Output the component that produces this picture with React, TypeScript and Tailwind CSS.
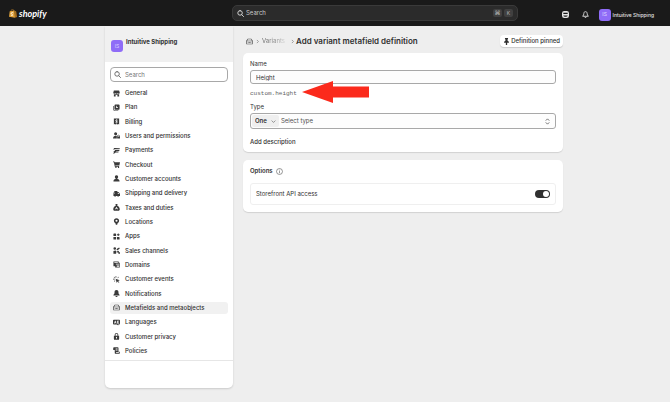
import { useState, type ReactNode } from 'react'
import clsx from 'clsx'

const navIcons: Record<string, ReactNode> = {
  General: <path d="M2 1h12l1.500 5a2.400 2.400 0 0 1-4.800 0 2.600 2.600 0 0 1-5.400 0A2.400 2.400 0 0 1 .5 6zM2 9.500h12V15h-4v-3.500H6V15H2z" />,
  Plan: <path fillRule="evenodd" d="M5.500 1H13a2 2 0 0 1 2 2v8a2 2 0 0 1-2 2H5.500a2 2 0 0 1-2-2V3a2 2 0 0 1 2-2zM7 4v5h4.500V7.500h-3V4zM.8 4.500v8.500a2.500 2.500 0 0 0 2.500 2.500H12V14H4a1.500 1.500 0 0 1-1.500-1.500v-8z" />,
  Billing: <path fillRule="evenodd" d="M2 1h12v14l-2-1.500-2 1.500-2-1.500L6 15l-2-1.500L2 15zm5.200 2v1C5 4.400 5 8 7.400 8.600c1.600.4 1.600 1.400.6 1.400H5.500v1.500h1.700v1h1.600v-1c2.400-.5 2.400-3.900 0-4.500-1.700-.4-1.700-1.500-.6-1.500h2.300V4H8.800V3z" />,
  'Users and permissions': <path fillRule="evenodd" d="M6 .5a3.500 3.500 0 1 1 0 7 3.500 3.500 0 0 1 0-7zM0 15c0-4 2.500-6.500 6-6.500 1 0 2 .2 2.700.5v6zM10 10V8.500a2.500 2.500 0 0 1 5 0V10h1v5H9.500v-5zm1.300 0h2.400V8.500a1.200 1.200 0 0 0-2.400 0z" />,
  Payments: <path d="M4 2h11c1 0 1 1.500 0 1.800L5 4.500c-1 .2-2 .8-2.500 1.500H1c.2-2.500 1.200-4 3-4zM5 6h10l-.8 3H8L6.500 10H13l-.8 2.500H6L3 15H0l3-4H1l1-2h3L3.500 8z" />,
  Checkout: <path d="M0 1h3l.7 2H16l-1.500 7H5.300l.3 1.200H14V13H4.200L2 3H0zM6 13.300a1.500 1.500 0 1 1 0 2.700 1.500 1.500 0 0 1 0-2.700zm6 0a1.500 1.500 0 1 1 0 2.700 1.500 1.500 0 0 1 0-2.700z" />,
  'Customer accounts': <path d="M8 .5a3.800 3.800 0 0 1 2.200 6.900L10 9c3.500.5 5 2.500 5 6H1c0-3.500 1.500-5.500 5-6l-.2-1.600A3.800 3.800 0 0 1 8 .5z" />,
  'Shipping and delivery': <path fillRule="evenodd" d="M3 2h7v2.500h3L16 9v4.500h-2a2.300 2.300 0 0 1-4.400 0H7a2.300 2.300 0 0 1-4.400 0H1V9h3V8H0V6h3zm8 4v3h2.800L12.300 6z" />,
  'Taxes and duties': <path fillRule="evenodd" d="M5.500 0h5l-1 3.500c3.500 1.500 6 5.500 6 8.500 0 2-1.200 3.500-3 3.500h-9c-1.800 0-3-1.500-3-3.500 0-3 2.500-7 6-8.500zM8 6.500 4.500 12h1.800l.7-1.200h2l.7 1.200h1.800z" />,
  Locations: <path fillRule="evenodd" d="M8 .5c3.600 0 6 2.600 6 5.800 0 2.600-1.600 4.700-3.500 5.700l-1 3.500h-3l-1-3.500C3.600 11 2 8.900 2 6.300 2 3.100 4.400.5 8 .5zm0 3.300a2.400 2.400 0 1 0 0 4.800 2.400 2.400 0 0 0 0-4.800z" />,
  Apps: <path d="M2 1h4a1 1 0 0 1 1 1v5H2a1 1 0 0 1-1-1V2a1 1 0 0 1 1-1zM11 1h2v2h2v2h-2v2h-2V5H9V3h2zM1 9h6v5a1 1 0 0 1-1 1H2a1 1 0 0 1-1-1zm8 0h5a1 1 0 0 1 1 1v4a1 1 0 0 1-1 1h-4a1 1 0 0 1-1-1z" />,
  'Sales channels': <path d="M4 .5a3 3 0 1 1 0 6 3 3 0 0 1 0-6zM9 4l5-3 1.500 2.500-5 4L8 7zM1 9l5-1 2 2.500L7 15.500H1zM11.500 8.500a2.200 2.200 0 1 1 0 4.400 2.200 2.200 0 0 1 0-4.400zM13 12h3v3.500h-4z" />,
  Domains: <path fillRule="evenodd" d="M1 1h12v3h2.500v11H5v-3H1zm2 1.500v1.300h8V2.500zM6.500 6v2H14V6zm2 4v3H14v-3z" />,
  'Customer events': <path d="m6 6 9.500 3.500-4 1.700 3 3-1.300 1.300-3-3L8.500 16zM6 0h1.500v4H6zM0 6.500h4V8H0zM1.500 2.500l1-1 2.800 2.800-1 1zM10 4.300l2.500-2.800 1 1-2.500 2.800zM2 12l2.500-2.500 1 1L3 13z" />,
  Notifications: <path d="M8 0c3 0 4.500 2 4.500 5 0 3 .5 3.500 2.500 6v1.500H1V11c2-2.500 2.500-3 2.500-6C3.500 2 5 0 8 0zM5.500 13.500h5a2.500 2.500 0 0 1-5 0z" />,
  'Metafields and metaobjects': <path fillRule="evenodd" d="M4 1.500h8L15.500 6v6.500a2 2 0 0 1-2 2h-11a2 2 0 0 1-2-2V6zM4.800 3 2.500 6h11l-2.300-3zM2 7.500v5c0 .3.200.5.5.5h11c.3 0 .5-.2.500-.5v-5zM4 9h2v2H4zm3 0h2v2H7zm3 0h2v2h-2z" />,
  Languages: <path fillRule="evenodd" d="M2 1.500h12a2 2 0 0 1 2 2v7a2 2 0 0 1-2 2h-2V15l-3-2.500H2a2 2 0 0 1-2-2v-7a2 2 0 0 1 2-2zM4.500 4 2.300 10h1.500l.4-1.200h1.800L6.400 10h1.500L5.700 4zM9 4v6h5V8.800h-3.500V7.500h3V6.300h-3V5.200H14V4z" />,
  'Customer privacy': <path fillRule="evenodd" d="M8 0c2.500 0 4 1.700 4 4v2h2v7.500a2 2 0 0 1-2 2H4a2 2 0 0 1-2-2V6h2V4c0-2.300 1.500-4 4-4zM5.800 6h4.400V4c0-1.400-.8-2.200-2.200-2.200S5.800 2.600 5.800 4zM8 8.500a1.500 1.500 0 0 0-.8 2.700V13h1.600v-1.800A1.500 1.500 0 0 0 8 8.500z" />,
  Policies: <path fillRule="evenodd" d="M2.500.5h8a2 2 0 0 1 2 2V11h3v2.500a2 2 0 0 1-2 2H6a2 2 0 0 1-2-2V7H.5V2.500a2 2 0 0 1 2-2zM6 3.500V5h4.500V3.500zm0 3V8h4.500V6.500zm1 5.500v1.500h6.500V12z" />,
}

function Icon({ children, className }: { children: ReactNode; className?: string }) {
  return (
    <svg viewBox="0 0 16 16" fill="currentColor" aria-hidden="true" className={clsx('shrink-0', className ?? 'size-[7px]')}>
      {children}
    </svg>
  )
}

function SearchIcon() {
  return (
    <Icon>
      <path d="M7 1.500a5.200 5.200 0 1 1 0 10.400 5.200 5.200 0 0 1 0-10.400zM11 11l4 4" fill="none" stroke="currentColor" strokeWidth="2" strokeLinecap="round" />
    </Icon>
  )
}

function Chevron() {
  return (
    <Icon className="size-[5px] text-[#8a8a8a]">
      <path d="m6 3 5 5-5 5" fill="none" stroke="currentColor" strokeWidth="2.500" />
    </Icon>
  )
}

function Avatar() {
  return (
    <span className="flex size-3 shrink-0 items-center justify-center rounded-[3px] bg-[#8f6cf7] text-[5px] leading-none text-[#d9cdff]">
      IS
    </span>
  )
}

function TopBar() {
  return (
    <header className="flex h-[26px] items-center bg-[#1a1a1a] text-[#e3e3e3]">
      <a href="#" className="flex w-[232px] shrink-0 items-center gap-[2px] pt-px pl-[9px] font-[Lato,sans-serif] text-[9px] leading-none font-bold text-white italic">
        <svg viewBox="0 0 16 18" className="h-[9px] w-2" aria-hidden="true">
          <path d="M1.500 4.500 11 3l1 14.500-12-2z" fill="#e0a33c" />
          <path d="m11 3 3.500 2L16 16l-4 1.500z" fill="#a86f1c" />
          <path d="M4 5c0-3 1.500-4.500 3-4.500S9.500 2 9.500 4" fill="none" stroke="#c98a2b" strokeWidth="1.200" />
          <path d="M8.500 7.500C6 6.500 4 7.500 4.300 9c.3 1.400 3 1.500 3 3 0 1.200-1.800 1.200-3.300.3" fill="none" stroke="#fff" strokeWidth="1.700" />
        </svg>
        shopify
      </a>
      <label className="flex h-4 max-w-[286px] flex-1 items-center gap-[2px] rounded-[5px] border border-[#3a3a3a] bg-[#2b2b2b] px-1">
        <SearchIcon />
        <input type="search" aria-label="Search" placeholder="Search" className="min-w-0 flex-1 bg-transparent text-[6px] leading-2 outline-none placeholder:text-[#c8c8c8]" />
        <kbd className="flex h-2 w-[9px] items-center justify-center rounded-[2px] bg-[#404040] font-[Inter,sans-serif] text-[6px] text-[#b5b5b5]">⌘</kbd>
        <kbd className="flex h-2 w-[9px] items-center justify-center rounded-[2px] bg-[#404040] font-[Inter,sans-serif] text-[5px] text-[#b5b5b5]">K</kbd>
      </label>
      <div className="ml-auto flex items-center gap-[10px] pt-[3px] pr-4">
        <button type="button" aria-label="Sidekick" className="mr-[3px]">
          <Icon>
            <path fillRule="evenodd" d="M5 0h6a5 5 0 0 1 5 5v6a5 5 0 0 1-5 5H5a5 5 0 0 1-5-5V5a5 5 0 0 1 5-5zM3 4v3h10V4zm0 6c1.500 4.500 8.500 4.500 10 0z" />
          </Icon>
        </button>
        <button type="button" aria-label="Notifications">
          <Icon>
            <path d="M8 1.500c2.500 0 3.800 1.700 3.800 4.200 0 3 .7 3.800 2.700 6.300h-13c2-2.500 2.700-3.300 2.700-6.300C4.200 3.200 5.500 1.500 8 1.500zM6 13c0 2.500 4 2.500 4 0" fill="none" stroke="currentColor" strokeWidth="2" />
          </Icon>
        </button>
        <button type="button" className="flex items-center gap-[2px] text-[5px] leading-2 font-medium">
          <Avatar />
          Intuitive Shipping
        </button>
      </div>
    </header>
  )
}

function Sidebar() {
  return (
    <aside className="w-32 shrink-0 self-start overflow-hidden rounded-b-[5px] bg-white shadow-[0_1px_2px_rgba(0,0,0,0.15)]">
      <div className="flex h-9 items-start gap-[3px] bg-[#f0f0f0] pt-3 pl-1.5">
        <div className="pt-[2px]">
          <Avatar />
        </div>
        <h2 className="text-[6px] leading-2 font-bold">Intuitive Shipping</h2>
      </div>
      <div className="px-[5px] pt-[5px] pb-[3px]">
        <label className="flex h-[15px] items-center gap-1 rounded-[4px] border border-[#a8a8a8] px-[3px] text-[#616161]">
          <SearchIcon />
          <input type="search" aria-label="Search settings" placeholder="Search" className="min-w-0 flex-1 bg-transparent text-[6px] leading-2 outline-none placeholder:text-[#757575]" />
        </label>
        <nav aria-label="Settings" className="mt-[5px]">
          <ul className="flex min-h-[270px] flex-col justify-between">
            {Object.entries(navIcons).map(([label, icon]) => {
              const active = label === 'Metafields and metaobjects'
              return (
                <li key={label}>
                  <a
                    href="#"
                    aria-current={active ? 'page' : undefined}
                    className={clsx('flex h-3 items-center gap-[5px] rounded-[3px] px-[3px] text-[6px] leading-2 font-medium', active && 'bg-[#f1f1f1]')}
                  >
                    <Icon className="size-[7px] text-[#3a3a3a]">{icon}</Icon>
                    {label}
                  </a>
                </li>
              )
            })}
          </ul>
        </nav>
      </div>
      <div className="h-7 border-t border-[#e6e6e6]" />
    </aside>
  )
}

function Card({ children }: { children: ReactNode }) {
  return <section className="rounded-[5px] bg-white px-[7px] pt-[7px] shadow-[0_1px_1px_rgba(0,0,0,0.12)]">{children}</section>
}

export default function App() {
  const [name, setName] = useState('Height')
  const [storefront, setStorefront] = useState(true)

  return (
    <div className="min-h-screen bg-[#eeeeee] font-[Inter,sans-serif] text-[6px] leading-2 text-[#303030]">
      <TopBar />
      <div className="mx-auto flex max-w-[460px] gap-[10px] pr-0.5">
        <Sidebar />
        <main className="min-w-0 flex-1 pt-[9px]">
          <div className="flex h-3 items-center">
            <nav aria-label="Breadcrumb" className="flex items-center gap-[2px] pl-[3px]">
              <a href="#" aria-label="Metafields" className="text-[#4a4a4a]">
                <Icon>{navIcons['Metafields and metaobjects']}</Icon>
              </a>
              <Chevron />
              <a href="#" className="w-[26px] overflow-hidden bg-linear-to-r from-[#616161] via-[#8a8a8a] to-transparent bg-clip-text whitespace-nowrap text-transparent">
                Variants
              </a>
              <Chevron />
            </nav>
            <h1 className="ml-px text-[8px] leading-3 font-semibold whitespace-nowrap">Add variant metafield definition</h1>
            <button type="button" className="ml-auto flex h-3 items-center gap-px rounded-[4px] bg-white px-[3px] font-medium whitespace-nowrap shadow-[0_1px_1px_rgba(0,0,0,0.15)]">
              <Icon>
                <path d="M4.500 0h7v2l-1 1v3l3 2.500V11H9.500v5h-3v-5h-4V8.500l3-2.500V3l-1-1z" />
              </Icon>
              Definition pinned
            </button>
          </div>

          <div className="mt-1.5 flex flex-col gap-2">
            <Card>
              <label htmlFor="name" className="block">Name</label>
              <input
                id="name"
                value={name}
                onChange={(e) => setName(e.target.value)}
                className="mt-0.5 block h-[14px] w-full rounded-[3px] border border-[#a8a8a8] bg-[#fdfdfd] px-[5px] outline-none"
              />
              <div className="relative mt-1.5">
                <code className="block font-['Liberation_Mono',monospace] text-[6px] leading-2 text-[#616161]">custom.height</code>
                <svg viewBox="0 0 67 22" className="absolute -top-[9px] left-[52px] h-[22px] w-[67px]" aria-hidden="true">
                  <path d="M0 11 31 0v5.500h36v11H31V22z" fill="#fb2a1c" />
                </svg>
              </div>
              <label htmlFor="type" className="mt-[5px] block">Type</label>
              <div className="mt-0.5 flex h-4 items-center rounded-[3px] border border-[#a8a8a8] bg-[#fdfdfd] px-[1px]">
                <div className="flex h-3 w-[27px] items-center rounded-[2px] bg-[#efefef] px-[3px]">
                  <select aria-label="Number of values" className="min-w-0 flex-1 appearance-none bg-transparent font-semibold outline-none">
                    <option>One</option>
                    <option>List</option>
                  </select>
                  <Icon className="size-[5px] text-[#616161]">
                    <path d="m2 5 6 6 6-6" fill="none" stroke="currentColor" strokeWidth="2" />
                  </Icon>
                </div>
                <select id="type" className="ml-[2px] min-w-0 flex-1 appearance-none bg-transparent text-[#505050] outline-none">
                  <option>Select type</option>
                </select>
                <Icon className="mr-[3px] size-[7px] text-[#616161]">
                  <path d="m4 6 4-4 4 4M4 10l4 4 4-4" fill="none" stroke="currentColor" strokeWidth="2" />
                </Icon>
              </div>
              <button type="button" className="mt-[9px] mb-1.5 block font-medium">Add description</button>
            </Card>

            <Card>
              <h2 className="flex items-center gap-[3px] font-semibold">
                Options
                <Icon className="size-[7px] text-[#616161]">
                  <path d="M8 1.200a6.800 6.800 0 1 1 0 13.600A6.800 6.800 0 0 1 8 1.200zM8 7v5M8 4v1.700" fill="none" stroke="currentColor" strokeWidth="1.500" />
                </Icon>
              </h2>
              <label className="mt-2 mb-[7px] flex h-[22px] items-center justify-between rounded-[3px] border border-[#efefef] px-[5px]">
                Storefront API access
                <input
                  type="checkbox"
                  role="switch"
                  checked={storefront}
                  onChange={(e) => setStorefront(e.target.checked)}
                  className="flex h-2 w-[15px] appearance-none items-center rounded-full bg-[#8a8a8a] px-px before:size-1.5 before:rounded-full before:bg-white checked:justify-end checked:bg-[#303030]"
                />
              </label>
            </Card>
          </div>
        </main>
      </div>
    </div>
  )
}
